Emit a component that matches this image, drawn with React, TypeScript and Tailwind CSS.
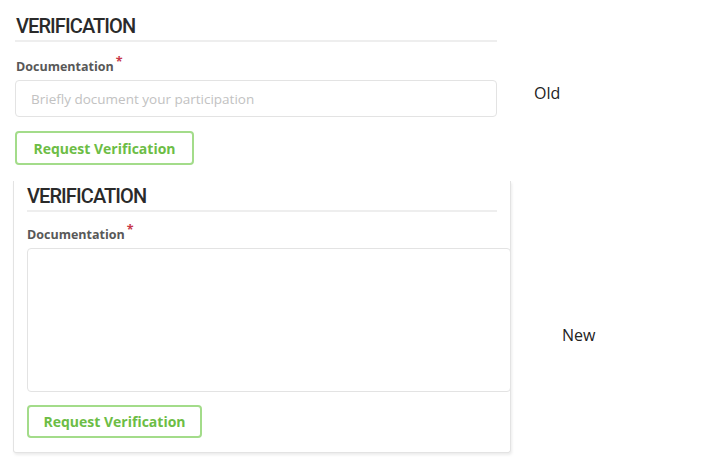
export default function App() {
  return (
    <div className="w-[709px] h-[468px] bg-white font-['Open_Sans',sans-serif] text-[#222]">
      {/* Old */}
      <div className="flex h-[181px]">
        <div className="w-[497px] pl-[15px] pt-[14px]">
          <h2 className="font-['Roboto',sans-serif] text-[20px] leading-[24px] font-medium tracking-[-0.9px] text-[#2a2a2a] pl-[1px]">
            VERIFICATION
          </h2>
          <div className="h-[2px] bg-[#eeeeee] mt-[2px]" />
          <label className="block mt-[17px] text-[12.5px] leading-[16px] font-bold text-[#585858] pl-[1px]">
            Documentation<span className="text-[#c8384a] relative -top-[5px] ml-[2px]">*</span>
          </label>
          <input
            className="block w-full h-[37px] mt-[5px] border border-[#e3e3e3] rounded-[4px] px-[15px] text-[13.5px] placeholder:text-[#c2c2c2] outline-none"
            placeholder="Briefly document your participation"
          />
          <button className="mt-[14px] w-[179px] h-[34px] border-2 border-[#a3dc8a] rounded-[4px] text-[14px] font-bold text-[#6cbd45]">
            Request Verification
          </button>
        </div>
        <div className="ml-[37px] pt-[82px] text-[16px] leading-[22px]">Old</div>
      </div>

      {/* New */}
      <div className="flex">
        <div className="ml-[13px] w-[498px] h-[272px] border-x border-b border-[#e3e3e3] rounded-b-[3px] shadow-[1px_2px_3px_rgba(0,0,0,0.08)] pl-[13px] pt-[3px]">
          <h2 className="font-['Roboto',sans-serif] text-[20px] leading-[24px] font-medium tracking-[-0.9px] text-[#2a2a2a]">
            VERIFICATION
          </h2>
          <div className="h-[2px] bg-[#eeeeee] mt-[2px] mr-[13px]" />
          <label className="block mt-[15px] text-[12.5px] leading-[16px] font-bold text-[#585858]">
            Documentation<span className="text-[#c8384a] relative -top-[5px] ml-[2px]">*</span>
          </label>
          <textarea className="block w-[484px] h-[144px] mt-[5px] border border-[#e3e3e3] rounded-[4px] resize-none outline-none" />
          <button className="mt-[13px] w-[175px] h-[33px] border-2 border-[#a3dc8a] rounded-[4px] text-[14px] font-bold text-[#6cbd45]">
            Request Verification
          </button>
        </div>
        <div className="ml-[51px] pt-[143px] text-[16px] leading-[22px]">New</div>
      </div>
    </div>
  );
}
